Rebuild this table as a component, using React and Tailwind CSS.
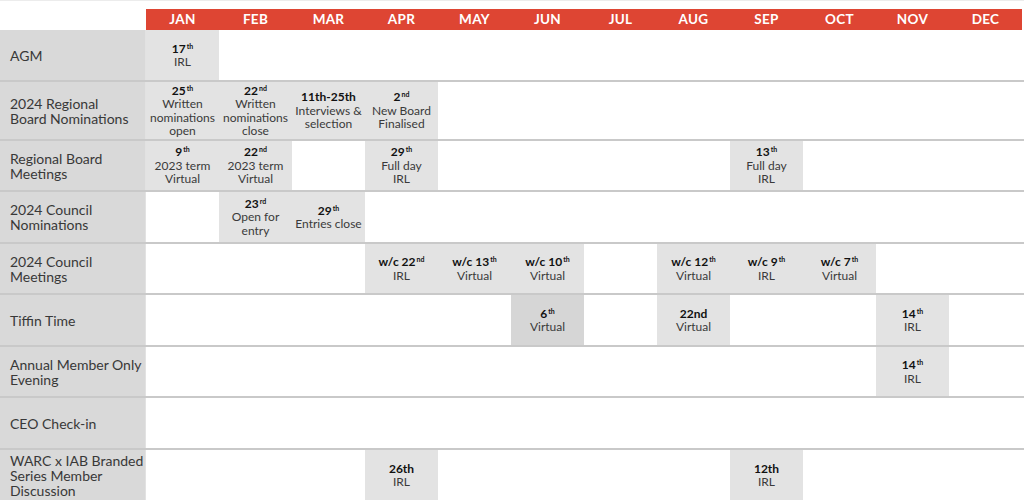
import React from "react";

const MONTHS = ["JAN","FEB","MAR","APR","MAY","JUN","JUL","AUG","SEP","OCT","NOV","DEC"];

const D = (n, s) => (
  <span className="font-bold text-[#111] text-[12px]">
    {n}
    {s && <span className="relative -top-[4px] text-[7px] font-bold leading-none ml-[1px]">{s}</span>}
  </span>
);

const rows = [
  { label: ["AGM"], h: "h-[52px]", cells: { 0: { d: D("17", "th"), t: ["IRL"] } } },
  {
    label: ["2024 Regional", "Board Nominations"], h: "h-[59px]",
    cells: {
      0: { d: D("25", "th"), t: ["Written", "nominations", "open"] },
      1: { d: D("22", "nd"), t: ["Written", "nominations", "close"] },
      2: { d: D("11th-25th"), t: ["Interviews &", "selection"] },
      3: { d: D("2", "nd"), t: ["New Board", "Finalised"] },
    },
  },
  {
    label: ["Regional Board", "Meetings"], h: "h-[51px]",
    cells: {
      0: { d: D("9", "th"), t: ["2023 term", "Virtual"] },
      1: { d: D("22", "nd"), t: ["2023 term", "Virtual"] },
      3: { d: D("29", "th"), t: ["Full day", "IRL"] },
      8: { d: D("13", "th"), t: ["Full day", "IRL"] },
    },
  },
  {
    label: ["2024 Council", "Nominations"], h: "h-[52px]",
    cells: {
      1: { d: D("23", "rd"), t: ["Open for", "entry"] },
      2: { d: D("29", "th"), t: ["Entries close"] },
    },
  },
  {
    label: ["2024 Council", "Meetings"], h: "h-[51px]",
    cells: {
      3: { d: D("w/c 22", "nd"), t: ["IRL"] },
      4: { d: D("w/c 13", "th"), t: ["Virtual"] },
      5: { d: D("w/c 10", "th"), t: ["Virtual"] },
      7: { d: D("w/c 12", "th"), t: ["Virtual"] },
      8: { d: D("w/c 9", "th"), t: ["IRL"] },
      9: { d: D("w/c 7", "th"), t: ["Virtual"] },
    },
  },
  {
    label: ["Tiffin Time"], h: "h-[52px]",
    cells: {
      5: { d: D("6", "th"), t: ["Virtual"], dark: true },
      7: { d: D("22nd"), t: ["Virtual"] },
      10: { d: D("14", "th"), t: ["IRL"] },
    },
  },
  {
    label: ["Annual Member Only", "Evening"], h: "h-[51px]",
    cells: { 10: { d: D("14", "th"), t: ["IRL"] } },
  },
  { label: ["CEO Check-in"], h: "h-[52px]", cells: {} },
  {
    label: ["WARC x IAB Branded", "Series Member", "Discussion"], h: "h-[50px]", last: true,
    cells: {
      3: { d: D("26th"), t: ["IRL"] },
      8: { d: D("12th"), t: ["IRL"] },
    },
  },
];

export default function App() {
  return (
    <div
      className="w-[1024px] h-[502px] bg-white overflow-hidden"
      style={{ fontFamily: "Lato, 'Open Sans', sans-serif" }}
    >
      <div className="h-[1px] bg-[#ececec]" />
      <div className="h-[8px]" />
      <div className="grid grid-cols-[146px_repeat(12,73px)] h-[21px]">
        <div />
        {MONTHS.map((m) => (
          <div
            key={m}
            className="bg-[#de4533] text-white font-bold text-[13.5px] flex items-center justify-center tracking-[0.3px]"
          >
            {m}
          </div>
        ))}
      </div>
      {rows.map((r, i) => (
        <div
          key={i}
          className={`grid grid-cols-[146px_repeat(12,73px)] ${r.h} ${r.last ? "" : "border-b-2 border-[#c9c9c9]"}`}
        >
          <div className="bg-[#d9d9d9] flex items-center pl-[10px] text-[14px] leading-[15px] text-[#383838] whitespace-nowrap border-r border-[#e2e2e2]">
            <div>
              {r.label.map((l, k) => (
                <div key={k}>{l}</div>
              ))}
            </div>
          </div>
          {MONTHS.map((m, j) => {
            const c = r.cells[j];
            if (!c) return <div key={m} />;
            return (
              <div
                key={m}
                className={`${c.dark ? "bg-[#d6d6d6]" : "bg-[#e3e3e3]"} flex flex-col items-center justify-center text-center text-[12px] leading-[13.5px] text-[#3a3a3a] whitespace-nowrap`}
              >
                <div className="leading-[13.5px]">{c.d}</div>
                {c.t.map((t, k) => (
                  <div key={k}>{t}</div>
                ))}
              </div>
            );
          })}
        </div>
      ))}
    </div>
  );
}
